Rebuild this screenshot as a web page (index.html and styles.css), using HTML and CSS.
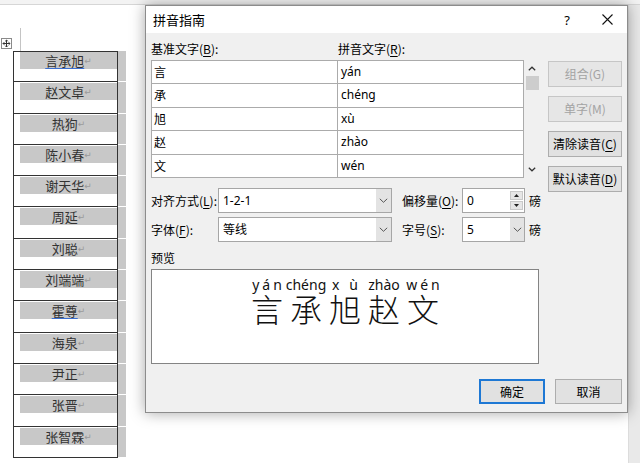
FILE: index.html
```html
<!DOCTYPE html>
<html>
<head>
<meta charset=utf-8>
<title>拼音指南</title>
<link rel="stylesheet" href="styles.css">
</head>
<body>
<div class="ribbon"></div>
<div class="workspace">
 <div class="doc">
  <div class="handle">
   <svg width="11" height="11" viewBox="0 0 11 11"><rect x="0.5" y="0.5" width="10" height="10" fill="#fff" stroke="#8a8a8a"/><path d="M5.5 2v7M2 5.5h7M5.5 2l-1.3 1.3M5.5 2l1.3 1.3M5.5 9l-1.3-1.3M5.5 9l1.3-1.3M2 5.5l1.3-1.3M2 5.5l1.3 1.3M9 5.5l-1.3-1.3M9 5.5l-1.3 1.3" stroke="#333" fill="none"/></svg>
  </div>
  <div class="names">
   <div class="row"><div class="cell"><div class="band"><span class="spell">言承旭</span><i>↵</i></div></div><div class="mark"></div></div>
   <div class="row"><div class="cell"><div class="band">赵文卓<i>↵</i></div></div><div class="mark"></div></div>
   <div class="row"><div class="cell"><div class="band">热狗<i>↵</i></div></div><div class="mark"></div></div>
   <div class="row"><div class="cell"><div class="band">陈小春<i>↵</i></div></div><div class="mark"></div></div>
   <div class="row"><div class="cell"><div class="band">谢天华<i>↵</i></div></div><div class="mark"></div></div>
   <div class="row"><div class="cell"><div class="band">周延<i>↵</i></div></div><div class="mark"></div></div>
   <div class="row"><div class="cell"><div class="band">刘聪<i>↵</i></div></div><div class="mark"></div></div>
   <div class="row"><div class="cell"><div class="band">刘端端<i>↵</i></div></div><div class="mark"></div></div>
   <div class="row"><div class="cell"><div class="band"><span class="spell">霍尊</span><i>↵</i></div></div><div class="mark"></div></div>
   <div class="row"><div class="cell"><div class="band">海泉<i>↵</i></div></div><div class="mark"></div></div>
   <div class="row"><div class="cell"><div class="band">尹正<i>↵</i></div></div><div class="mark"></div></div>
   <div class="row"><div class="cell"><div class="band">张晋<i>↵</i></div></div><div class="mark"></div></div>
   <div class="row"><div class="cell"><div class="band">张智霖<i>↵</i></div></div><div class="mark"></div></div>
  </div>
 </div>
 <div class="vscroll"></div>
</div>

<div class="dialog">
 <div class="titlebar">
  <span class="title">拼音指南</span>
  <span class="tb-btn help">?</span>
  <span class="tb-btn"><svg width="11" height="11" viewBox="0 0 11 11"><path d="M0.5 0.5l10 10M10.5 0.5l-10 10" stroke="#111" stroke-width="1.1"/></svg></span>
 </div>
 <div class="content">
  <div class="top">
   <div class="left">
    <div class="heads">
     <span>基准文字(<u>B</u>):</span>
     <span>拼音文字(<u>R</u>):</span>
    </div>
    <div class="listwrap">
     <div class="pairs">
      <span>言</span><span class="py">yán</span>
      <span>承</span><span class="py">chéng</span>
      <span>旭</span><span class="py">xù</span>
      <span>赵</span><span class="py">zhào</span>
      <span>文</span><span class="py">wén</span>
     </div>
     <div class="lscroll">
      <div class="arr"><svg width="8" height="5" viewBox="0 0 8 5"><path d="M0.8 4.3L4 1.2l3.2 3.1" stroke="#333" stroke-width="1.2" fill="none"/></svg></div>
      <div class="thumb"></div>
      <div class="fill"></div>
      <div class="arr"><svg width="8" height="5" viewBox="0 0 8 5"><path d="M0.8 0.7L4 3.8l3.2-3.1" stroke="#333" stroke-width="1.2" fill="none"/></svg></div>
     </div>
    </div>
   </div>
   <div class="side">
    <div class="btn off">组合(G)</div>
    <div class="btn off">单字(M)</div>
    <div class="btn">清除读音(<u>C</u>)</div>
    <div class="btn">默认读音(<u>D</u>)</div>
   </div>
  </div>

  <div class="opts">
   <span>对齐方式(<u>L</u>):</span>
   <div class="select"><span class="val">1-2-1</span><span class="drop"><svg width="9" height="5" viewBox="0 0 9 5"><path d="M0.8 0.8l3.7 3.5 3.7-3.5" stroke="#555" fill="none"/></svg></span></div>
   <span class="lab2">偏移量(<u>O</u>):</span>
   <div class="select small"><span class="val">0</span><span class="spin"><b><svg width="5" height="3" viewBox="0 0 5 3"><path d="M0 3L2.5 0 5 3z" fill="#222"/></svg></b><b><svg width="5" height="3" viewBox="0 0 5 3"><path d="M0 0l2.5 3L5 0z" fill="#222"/></svg></b></span></div>
   <span class="unit">磅</span>

   <span>字体(<u>F</u>):</span>
   <div class="select"><span class="val">等线</span><span class="drop"><svg width="9" height="5" viewBox="0 0 9 5"><path d="M0.8 0.8l3.7 3.5 3.7-3.5" stroke="#555" fill="none"/></svg></span></div>
   <span class="lab2">字号(<u>S</u>):</span>
   <div class="select small"><span class="val">5</span><span class="drop"><svg width="9" height="5" viewBox="0 0 9 5"><path d="M0.8 0.8l3.7 3.5 3.7-3.5" stroke="#555" fill="none"/></svg></span></div>
   <span class="unit">磅</span>
  </div>

  <div class="prev-label">预览</div>
  <div class="preview">
   <div class="ch"><span class="pin spread">yán</span><span class="han">言</span></div>
   <div class="ch"><span class="pin">chéng</span><span class="han">承</span></div>
   <div class="ch"><span class="pin wide">xù</span><span class="han">旭</span></div>
   <div class="ch"><span class="pin">zhào</span><span class="han">赵</span></div>
   <div class="ch"><span class="pin spread">wén</span><span class="han">文</span></div>
  </div>

  <div class="footer">
   <div class="btn ok">确定</div>
   <div class="btn cancel">取消</div>
  </div>
 </div>
</div>
</body>
</html>
```

FILE: styles.css
```css
html, body
{
	margin:0;
	padding:0;
	height:100%;
}
body
{
	background:#fff;
	font-family:"Noto Sans", "Noto Sans CJK SC", sans-serif;
	font-size:12px;
	color:#000;
	overflow:hidden;
}
u { text-decoration:underline; text-underline-offset:2px; }

/* document behind the dialog */
.ribbon
{
	height:4px;
	background:#f3f3f3;
	border-bottom:1px solid #d6d6d6;
}
.workspace
{
	display:flex;
	height:458px;
}
.doc
{
	flex:1;
	position:relative;
	padding:33px 0 0 1px;
}
.doc:before
{
	content:"";
	position:absolute;
	left:20px;
	top:23px;
	width:1px;
	height:23px;
	background:#c4c4c4;
}
.handle { height:11px; line-height:0; }
.names { margin:2px 0 0 12px; }
.row
{
	display:flex;
	height:31.3px;
}
.cell
{
	box-sizing:border-box;
	width:105px;
	border:1px solid #333;
	border-top:none;
	padding:1px 0 0 6px;
}
.row:first-child .cell { border-top:1px solid #333; padding-top:0; }
.band
{
	background:#c8c8c8;
	height:17px;
	line-height:17px;
	text-align:center;
	font-family:"Noto Sans CJK SC", sans-serif;
	font-size:13px;
	color:#333;
}
.band i
{
	font-style:normal;
	font-family:"DejaVu Sans", sans-serif;
	font-size:9px;
	color:#9a9a9a;
	vertical-align:2px;
}
.spell
{
	text-decoration:underline;
	text-decoration-color:#3a6fd2;
	text-underline-offset:2px;
}
.mark
{
	width:8px;
	background:#c8c8c8;
	border-bottom:1px solid #fff;
	box-sizing:border-box;
}
.vscroll
{
	width:11px;
	background:#e9e9e9;
	border-left:1px solid #dcdcdc;
}

/* dialog */
.dialog
{
	position:absolute;
	left:145px;
	top:5px;
	width:483px;
	height:408px;
	box-sizing:border-box;
	border:1px solid #8c8c8c;
	background:#f0f0f0;
	box-shadow:0 0 14px rgba(0,0,0,.35);
	display:flex;
	flex-direction:column;
	font-family:"Noto Sans CJK SC", sans-serif;
}
.titlebar
{
	height:27px;
	background:#fff;
	display:flex;
	align-items:center;
	padding-left:7px;
}
.titlebar .title { flex:1; font-size:13px; }
.tb-btn
{
	width:40px;
	height:27px;
	display:flex;
	align-items:center;
	justify-content:center;
}
.tb-btn.help { font-size:13px; font-family:"Noto Sans", sans-serif; }
.content
{
	flex:1;
	padding:8px 5px 0 5px;
	display:flex;
	flex-direction:column;
}
.top
{
	display:grid;
	grid-template-columns:388px 74px;
	grid-template-rows:137px;
	column-gap:9px;
}
.heads
{
	display:grid;
	grid-template-columns:187px 187px;
	height:16px;
	line-height:16px;
	margin-bottom:3px;
}
.listwrap { display:flex; }
.pairs
{
	display:grid;
	grid-template-columns:186px 186px;
	border-top:1px solid #ababab;
	border-left:1px solid #ababab;
}
.pairs span
{
	box-sizing:border-box;
	height:23.4px;
	line-height:22px;
	padding-left:2px;
	background:#fff;
	border-right:1px solid #ababab;
	border-bottom:1px solid #ababab;
}
.pairs .py { padding-left:3px; font-family:"Noto Sans", "Noto Sans CJK SC", sans-serif; }
.lscroll
{
	width:15px;
	display:flex;
	flex-direction:column;
	align-items:center;
}
.lscroll .arr
{
	height:16px;
	display:flex;
	align-items:center;
	justify-content:center;
}
.lscroll .thumb
{
	width:13px;
	height:14px;
	background:#cdcdcd;
	margin-left:1px;
}
.lscroll .fill { flex:1; }
.side
{
	display:flex;
	flex-direction:column;
	gap:9px;
	padding-top:20px;
	overflow:visible;
	min-height:0;
}
.btn
{
	box-sizing:border-box;
	height:26px;
	flex:none;
	line-height:24px;
	text-align:center;
	border:1px solid #adadad;
	background:#e1e1e1;
	color:#000;
}
.btn.off
{
	color:#a3a3a3;
	border-color:#c6c6c6;
	background:#e6e6e6;
}

.opts
{
	margin-top:10px;
	display:grid;
	grid-template-columns:67px 174px 70px 63px 1fr;
	grid-template-rows:25px 25px;
	row-gap:4px;
	align-items:center;
}
.opts .lab2 { padding-left:10px; }
.opts .unit { padding-left:4px; }
.select
{
	box-sizing:border-box;
	height:25px;
	border:1px solid #a6a6a6;
	background:#fff;
	display:flex;
}
.select .val
{
	flex:1;
	padding-left:4px;
	line-height:23px;
	font-family:"Noto Sans", "Noto Sans CJK SC", sans-serif;
}
.select .drop
{
	width:15px;
	background:#e3e3e3;
	display:flex;
	align-items:center;
	justify-content:center;
}
.select.small .drop { width:14px; }
.spin
{
	width:13px;
	display:flex;
	flex-direction:column;
	gap:1px;
	padding:2px 1px 2px 0;
}
.spin b
{
	flex:1;
	background:#e6e6e6;
	border:1px solid #c9c9c9;
	display:flex;
	align-items:center;
	justify-content:center;
}

.prev-label
{
	margin-top:8px;
	height:16px;
	line-height:16px;
}
.preview
{
	box-sizing:border-box;
	margin-top:3px;
	width:388px;
	height:95px;
	border:1px solid #848484;
	background:#fff;
	display:flex;
	justify-content:center;
	padding-top:7px;
}
.ch
{
	width:39px;
	display:flex;
	flex-direction:column;
	align-items:center;
}
.pin
{
	font-family:"Noto Sans", sans-serif;
	font-size:14px;
	line-height:15px;
	white-space:nowrap;
	color:#111;
}
.pin.spread { letter-spacing:3px; margin-right:-3px; }
.pin.wide { letter-spacing:10px; margin-right:-10px; }
.han
{
	font-family:"Noto Sans CJK SC", sans-serif;
	font-weight:300;
	font-size:32px;
	line-height:32px;
	color:#111;
}

.footer
{
	margin-top:15px;
	display:flex;
	justify-content:flex-end;
	gap:10px;
}
.footer .btn { height:25px; line-height:23px; }
.footer .ok { width:66px; border:2px solid #1e78d4; line-height:21px; }
.footer .cancel { width:67px; }
```
